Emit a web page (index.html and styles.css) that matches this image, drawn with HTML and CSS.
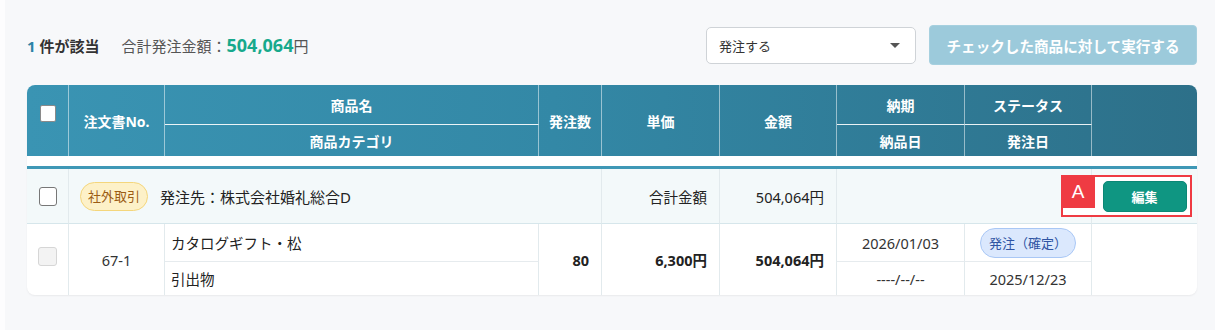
FILE: index.html
```html
<!DOCTYPE html>
<html lang="ja">
<head>
<meta charset="utf-8">
<title>発注一覧</title>
<link rel="stylesheet" href="styles.css">
</head>
<body>
<div class="page">
  <div class="topbar">
    <div class="count"><span class="count-num">1</span> 件が該当</div>
    <div class="total">合計発注金額：<span class="total-num">504,064</span>円</div>
    <div class="actions">
      <div class="select">
        <span>発注する</span>
        <span class="caret"></span>
      </div>
      <button class="run-btn">チェックした商品に対して実行する</button>
    </div>
  </div>

  <div class="table-card">
    <table class="orders">
      <colgroup>
        <col class="c1"><col class="c2"><col class="c3"><col class="c4"><col class="c5"><col class="c6"><col class="c7"><col class="c8"><col class="c9">
      </colgroup>
      <thead>
        <tr class="hr1">
          <th rowspan="2" class="th-check"><input type="checkbox" class="cb cb-head"></th>
          <th rowspan="2">注文書No.</th>
          <th class="grp">商品名</th>
          <th rowspan="2">発注数</th>
          <th rowspan="2">単価</th>
          <th rowspan="2">金額</th>
          <th class="grp">納期</th>
          <th class="grp">ステータス</th>
          <th rowspan="2" class="last"></th>
        </tr>
        <tr class="hr2">
          <th>商品カテゴリ</th>
          <th>納品日</th>
          <th>発注日</th>
        </tr>
      </thead>
      <tbody>
        <tr class="spacer"><td colspan="9"></td></tr>
        <tr class="group">
          <td class="center"><input type="checkbox" class="cb cb-group"></td>
          <td colspan="3" class="supplier"><span class="tag-ext">社外取引</span><span class="supplier-name">発注先：株式会社婚礼総合D</span></td>
          <td class="right">合計金額</td>
          <td class="right">504,064円</td>
          <td colspan="2"></td>
          <td class="last edit-cell">
            <div class="annot"><span class="annot-label">A</span></div>
            <button class="edit-btn">編集</button>
          </td>
        </tr>
        <tr class="item-a">
          <td rowspan="2" class="center"><input type="checkbox" class="cb cb-disabled" disabled></td>
          <td rowspan="2" class="center">67-1</td>
          <td class="split name">カタログギフト・松</td>
          <td rowspan="2" class="right bold">80</td>
          <td rowspan="2" class="right bold">6,300円</td>
          <td rowspan="2" class="right bold">504,064円</td>
          <td class="split center">2026/01/03</td>
          <td class="split center"><span class="status">発注（確定）</span></td>
          <td rowspan="2" class="last"></td>
        </tr>
        <tr class="item-b">
          <td class="name">引出物</td>
          <td class="center">----/--/--</td>
          <td class="center">2025/12/23</td>
        </tr>
      </tbody>
    </table>
  </div>
</div>
</body>
</html>
```

FILE: styles.css
```css
* { box-sizing: border-box; }

html, body {
  margin: 0;
  padding: 0;
  background: #fdfdfe;
}

body {
  font-family: "Noto Sans", "Noto Sans CJK JP", sans-serif;
  font-size: 14px;
  color: #333;
}

.page {
  margin-left: 5px;
  min-height: 330px;
  background: #f7f8fa;
  padding: 25px 18px 0 22px;
}

.topbar {
  display: flex;
  align-items: center;
  height: 40px;
  margin-bottom: 20px;
}

.count {
  font-weight: 700;
  font-size: 15px;
  color: #333;
}

.count-num {
  color: #2c82a6;
}

.total {
  margin-left: 22px;
  font-size: 15px;
  color: #555;
  display: flex;
  align-items: baseline;
}

.total-num {
  font-size: 18px;
  font-weight: 700;
  color: #17a98c;
}

.actions {
  margin-left: auto;
  display: flex;
  align-items: center;
  gap: 13px;
}

.select {
  width: 210px;
  height: 37px;
  background: #fff;
  border: 1px solid #cfd3d7;
  border-radius: 5px;
  display: flex;
  align-items: center;
  justify-content: space-between;
  padding: 0 15px 0 12px;
  font-size: 13px;
  color: #333;
}

.caret {
  width: 0;
  height: 0;
  border-left: 5px solid transparent;
  border-right: 5px solid transparent;
  border-top: 5px solid #555;
}

.run-btn {
  width: 268px;
  height: 40px;
  border: 1px solid #a6d0df;
  border-radius: 4px;
  background: #9ccadb;
  color: #fff;
  font-family: inherit;
  font-size: 14.6px;
  font-weight: 700;
  padding: 0;
}

.table-card {
  width: 1170px;
  background: #fff;
  border-radius: 8px;
  box-shadow: 0 1px 2px rgba(0, 0, 0, 0.06);
  overflow: hidden;
}

.orders {
  width: 1170px;
  table-layout: fixed;
  border-collapse: separate;
  border-spacing: 0;
}

.c1 { width: 42px; }
.c2 { width: 96px; }
.c3 { width: 374px; }
.c4 { width: 63px; }
.c5 { width: 118px; }
.c6 { width: 117px; }
.c7 { width: 128px; }
.c8 { width: 127px; }
.c9 { width: 105px; }

.orders th,
.orders td {
  padding: 0;
  vertical-align: middle;
}

.orders tbody td {
  font-size: 14.5px;
}

.orders thead {
  background: linear-gradient(90deg, #3a94b3 0%, #3388a6 45%, #2d7089 100%);
}

.orders th {
  color: #fff;
  font-weight: 700;
  font-size: 14px;
  text-align: center;
  border-right: 1px solid rgba(255, 255, 255, 0.5);
}

.orders th.last { border-right: none; }

.orders th.grp {
  border-bottom: 1px solid rgba(255, 255, 255, 0.9);
}

.hr1 { height: 40px; }
.hr2 { height: 31px; }

.orders th.th-check {
  vertical-align: top;
  padding-top: 20px;
}

.cb {
  appearance: none;
  -webkit-appearance: none;
  display: block;
  margin: 0 auto;
}

.cb-head {
  width: 16px;
  height: 17px;
  background: #fff;
  border: 1px solid #8a8a8a;
  border-radius: 2px;
}

.cb-group {
  width: 18px;
  height: 19px;
  background: #fff;
  border: 1.5px solid #777;
  border-radius: 3px;
}

.cb-disabled {
  width: 19px;
  height: 19px;
  background: #f3f3f3;
  border: 1px solid #d6d6d6;
  border-radius: 3px;
  margin-bottom: 6px;
}

.spacer { height: 13px; }
.spacer td {
  background: #fff;
  border-bottom: 3px solid #3f98b6;
}

.orders tbody td {
  border-right: 1px solid #e2eaed;
}

.orders tbody td.last { border-right: none; }
.orders tbody .spacer td { border-right: none; }

.group { height: 55px; }
.group td {
  background: #f3f9fa;
  border-bottom: 1px solid #d6e6eb;
  color: #222;
}

.item-a { height: 38px; }
.item-b { height: 33px; }

.orders td.split {
  border-bottom: 1px solid #e6ebee;
}

.center { text-align: center; }
.right { text-align: right; padding-right: 12px !important; }
.bold { font-weight: 700; color: #222; }

.name { padding-left: 6px !important; color: #222; }

.supplier {
  padding-left: 11px !important;
}

.supplier-name {
  margin-left: 12px;
  vertical-align: middle;
  font-size: 15px;
}

.tag-ext {
  display: inline-block;
  vertical-align: middle;
  height: 29px;
  line-height: 27px;
  padding: 0 7px;
  border: 1px solid #f4d67c;
  background: #fdf1c8;
  color: #9b5c14;
  border-radius: 15px;
  font-size: 13px;
}

.status {
  display: inline-block;
  height: 30px;
  line-height: 28px;
  padding: 0 8px;
  border: 1px solid #a9c7f5;
  background: #dbe8fd;
  color: #2f54a3;
  border-radius: 15px;
  font-size: 13px;
}

.edit-cell {
  position: relative;
  text-align: center;
}

.annot {
  position: absolute;
  left: -31px;
  top: 6px;
  width: 131px;
  height: 42px;
  border: 2px solid #ef3b43;
  background: #fff;
}

.annot-label {
  position: absolute;
  left: -2px;
  top: -2px;
  width: 34px;
  height: 33px;
  background: #ef3b43;
  color: #fff;
  font-family: "Liberation Sans", Arial, sans-serif;
  font-size: 19px;
  line-height: 33px;
  text-align: center;
}

.edit-btn {
  position: relative;
  z-index: 1;
  width: 84px;
  height: 31px;
  border: 1px solid #0b8775;
  border-radius: 5px;
  background: #0f9682;
  color: #fff;
  font-family: inherit;
  font-size: 13px;
  font-weight: 700;
  padding: 0;
  display: block;
  margin: 0 auto;
}
```
